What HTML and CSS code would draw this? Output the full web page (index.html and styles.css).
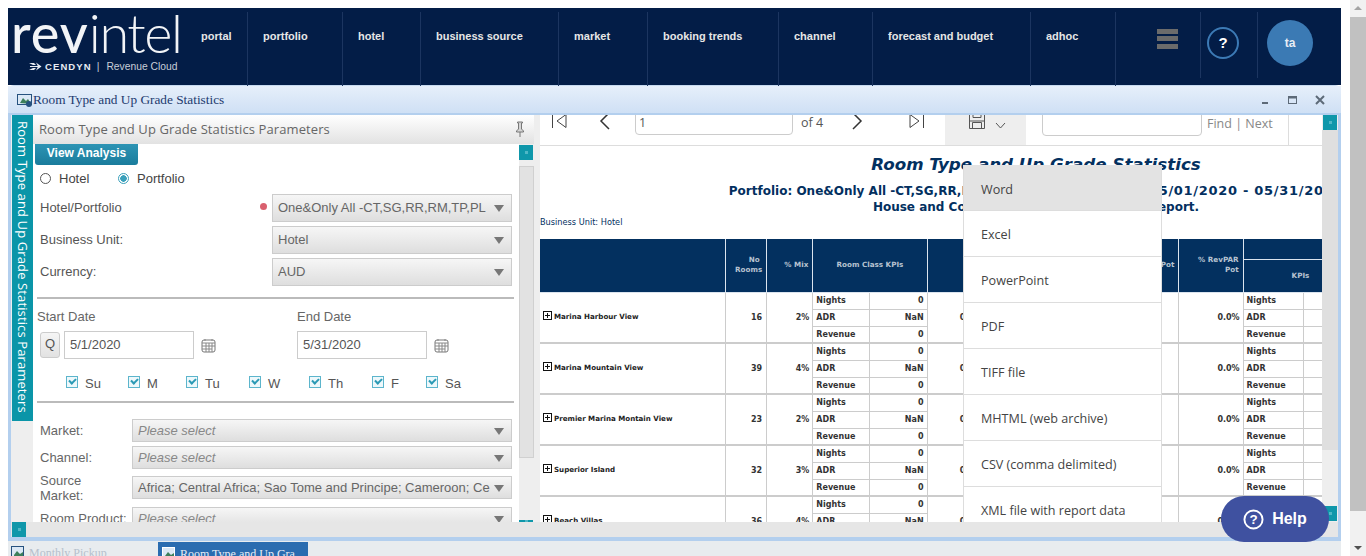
FILE: index.html
```html
<!DOCTYPE html>
<html lang="en">
<head>
    <meta charset="UTF-8">
    <title>Room Type and Up Grade Statistics</title>
    <link rel="stylesheet" href="styles.css">
</head>
<body>
    <div class="page-scroll">
        <span class="arrow-up"></span>
        <div class="page-thumb"></div>
        <span class="arrow-down"></span>
    </div>

    <header class="topbar">
        <div class="logo">
            <div class="logo-word"><b>rev</b>intel</div>
            <div class="logo-sub">
                <svg width="13" height="9" viewBox="0 0 13 9"><path d="M0 1h5l2 2h-3zM1 4h11v1H1zM0 8h5l2-2H4zM7 0.500l5.500 4-5.500 4 2-4z" fill="#e8ecf2"/></svg>
                <b>CENDYN</b><i>|</i><span>Revenue Cloud</span>
            </div>
        </div>
        <nav class="nav">
            <a>portal</a>
            <a>portfolio</a>
            <a>hotel</a>
            <a>business source</a>
            <a>market</a>
            <a>booking trends</a>
            <a>channel</a>
            <a>forecast and budget</a>
            <a>adhoc</a>
        </nav>
        <div class="nav-tool tool-menu">
            <span class="burger"></span>
        </div>
        <div class="nav-tool tool-help"><span class="help-ring">?</span></div>
        <div class="nav-tool tool-user"><span class="avatar">ta</span></div>
    </header>

    <div class="window">
        <div class="window-title">
            <svg class="win-icon" width="16" height="14" viewBox="0 0 16 14"><rect x="0.500" y="1.500" width="14" height="10" fill="#dbe8f5" stroke="#27527f"/><path d="M3 10l3-5 3 3 2-2 3 5z" fill="#3d7f5a"/><circle cx="12" cy="11" r="3" fill="#27527f"/></svg>
            <span class="win-name">Room Type and Up Grade Statistics</span>
            <div class="win-buttons">
                <svg width="10" height="10" viewBox="0 0 10 10"><rect x="1" y="7" width="6" height="2" fill="#5d6a78"/></svg>
                <svg width="10" height="10" viewBox="0 0 10 10"><rect x="0.500" y="1.500" width="8" height="7" fill="none" stroke="#5d6a78"/><rect x="0" y="1" width="9" height="2.500" fill="#5d6a78"/></svg>
                <svg width="10" height="10" viewBox="0 0 10 10"><path d="M1 1l8 8M9 1l-8 8" stroke="#5d6a78" stroke-width="2"/></svg>
            </div>
        </div>

        <div class="window-body">
            <div class="side-tab"><span>Room Type and Up Grade Statistics Parameters</span></div>

            <section class="params">
                <div class="params-head">
                    <span>Room Type and Up Grade Statistics Parameters</span>
                    <svg width="12" height="16" viewBox="0 0 12 16"><path d="M3.500 1h5v1h-1v6l2 2v1h-7v-1l2-2V2h-1z M6 11v5" fill="#d5d5d5" stroke="#777"/></svg>
                </div>
                <div class="params-main">
                    <div class="params-form">
                        <button class="view-btn">View Analysis</button>
                        <div class="radio-row">
                            <span class="radio"></span><label>Hotel</label>
                            <span class="radio on"></span><label>Portfolio</label>
                        </div>

                        <div class="field-row">
                            <label>Hotel/Portfolio</label>
                            <span class="req"></span>
                            <div class="select wide">One&amp;Only All -CT,SG,RR,RM,TP,PL</div>
                        </div>
                        <div class="field-row">
                            <label>Business Unit:</label>
                            <div class="select wide">Hotel</div>
                        </div>
                        <div class="field-row">
                            <label>Currency:</label>
                            <div class="select wide">AUD</div>
                        </div>

                        <hr class="rule first">

                        <div class="dates">
                            <div class="date-col">
                                <div class="date-label">Start Date</div>
                                <div class="date-line">
                                    <span class="q-btn">Q</span>
                                    <span class="date-input">5/1/2020</span>
                                    <svg class="cal" width="15" height="15" viewBox="0 0 15 15"><rect x="1" y="2" width="13" height="12" rx="2" fill="#fff" stroke="#777"/><path d="M1 5h13M5 5v9M8 5v9M11 5v9M1 8h13M1 11h10M4 1v2M11 1v2" stroke="#888"/></svg>
                                </div>
                            </div>
                            <div class="date-col">
                                <div class="date-label">End Date</div>
                                <div class="date-line">
                                    <span class="date-input">5/31/2020</span>
                                    <svg class="cal" width="15" height="15" viewBox="0 0 15 15"><rect x="1" y="2" width="13" height="12" rx="2" fill="#fff" stroke="#777"/><path d="M1 5h13M5 5v9M8 5v9M11 5v9M1 8h13M1 11h10M4 1v2M11 1v2" stroke="#888"/></svg>
                                </div>
                            </div>
                        </div>

                        <div class="days">
                            <span class="day d-su"><i class="check"></i>Su</span>
                            <span class="day d-m"><i class="check"></i>M</span>
                            <span class="day d-tu"><i class="check"></i>Tu</span>
                            <span class="day d-w"><i class="check"></i>W</span>
                            <span class="day d-th"><i class="check"></i>Th</span>
                            <span class="day d-f"><i class="check"></i>F</span>
                            <span class="day d-sa"><i class="check"></i>Sa</span>
                        </div>

                        <hr class="rule second">

                        <div class="filter-row">
                            <label>Market:</label>
                            <div class="select hint">Please select</div>
                        </div>
                        <div class="filter-row">
                            <label>Channel:</label>
                            <div class="select hint">Please select</div>
                        </div>
                        <div class="filter-row source">
                            <label>Source Market:</label>
                            <div class="select">Africa; Central Africa; Sao Tome and Principe; Cameroon; Ce</div>
                        </div>
                        <div class="filter-row">
                            <label>Room Product:</label>
                            <div class="select hint">Please select</div>
                        </div>
                    </div>

                    <div class="v-scroll left-scroll">
                        <span class="sb-btn"></span>
                        <div class="sb-thumb"></div>
                        <span class="sb-btn bottom"></span>
                    </div>
                </div>
            </section>

            <section class="report">
                <div class="toolbar">
                    <svg class="t-first" width="16" height="16" viewBox="0 0 16 16"><path d="M1.500 1v14M15 1.500L6 8l9 6.500z" fill="none" stroke="#444"/></svg>
                    <svg class="t-prev" width="11" height="18" viewBox="0 0 11 18"><path d="M10 1L2 9l8 8" fill="none" stroke="#333" stroke-width="1.500"/></svg>
                    <span class="page-input">1</span>
                    <span class="page-of">of 4</span>
                    <svg class="t-next" width="11" height="18" viewBox="0 0 11 18"><path d="M1 1l8 8-8 8" fill="none" stroke="#333" stroke-width="1.500"/></svg>
                    <svg class="t-last" width="16" height="16" viewBox="0 0 16 16"><path d="M14.500 1v14M1 1.500L10 8l-9 6.500z" fill="none" stroke="#444"/></svg>
                    <div class="save-box">
                        <svg width="18" height="17" viewBox="0 0 18 17"><path d="M1.500 0.500h13l2 2v14h-15zM5 0.500v5h8v-5M4.500 16.500v-6h9v6M1.500 9h15" fill="none" stroke="#555"/></svg>
                        <svg class="chev" width="11" height="7" viewBox="0 0 11 7"><path d="M1 1l4.500 5L10 1" fill="none" stroke="#555"/></svg>
                    </div>
                    <span class="find-input"></span>
                    <span class="find-links">Find | Next</span>
                </div>

                <div class="report-page">
                    <h1>Room Type and Up Grade Statistics</h1>
                    <h2>Portfolio: One&amp;Only All -CT,SG,RR,RM,TP,PL Stay Date Range: <span class="range">05/01/2020 - 05/31/2020</span><br>House and Complimentary Rooms in this report.</h2>
                    <div class="unit">Business Unit: Hotel</div>

                    <table class="grid">
                        <colgroup>
                            <col class="c-name"><col class="c-rooms"><col class="c-mix"><col class="c-kpi"><col class="c-val">
                            <col class="c-a"><col class="c-b"><col class="c-rev"><col class="c-kpi2"><col class="c-val">
                        </colgroup>
                        <thead>
                            <tr class="head-a">
                                <th rowspan="2"></th>
                                <th rowspan="2">No&nbsp;<br>Rooms</th>
                                <th rowspan="2">% Mix</th>
                                <th rowspan="2" colspan="2" class="mid">Room Class KPIs</th>
                                <th rowspan="2"></th>
                                <th rowspan="2" class="pot">% Pot</th>
                                <th rowspan="2">% RevPAR Pot</th>
                                <th colspan="2"></th>
                            </tr>
                            <tr class="head-b">
                                <th colspan="2" class="kpi-head">KPIs</th>
                            </tr>
                        </thead>
                        <tbody>
                            <tr>
                                <td rowspan="3" class="name"><i class="plus"></i>Marina Harbour View</td>
                                <td rowspan="3" class="num room-n">16</td>
                                <td rowspan="3" class="num">2%</td>
                                <td>Nights</td><td class="num">0</td>
                                <td rowspan="3" class="num">0.0%</td><td rowspan="3"></td>
                                <td rowspan="3" class="num">0.0%</td>
                                <td>Nights</td><td class="num">0</td>
                            </tr>
                            <tr><td>ADR</td><td class="num">NaN</td><td>ADR</td><td class="num">NaN</td></tr>
                            <tr class="end"><td>Revenue</td><td class="num">0</td><td>Revenue</td><td class="num">0</td></tr>
                            <tr>
                                <td rowspan="3" class="name"><i class="plus"></i>Marina Mountain View</td>
                                <td rowspan="3" class="num room-n">39</td>
                                <td rowspan="3" class="num">4%</td>
                                <td>Nights</td><td class="num">0</td>
                                <td rowspan="3" class="num">0.0%</td><td rowspan="3"></td>
                                <td rowspan="3" class="num">0.0%</td>
                                <td>Nights</td><td class="num">0</td>
                            </tr>
                            <tr><td>ADR</td><td class="num">NaN</td><td>ADR</td><td class="num">NaN</td></tr>
                            <tr class="end"><td>Revenue</td><td class="num">0</td><td>Revenue</td><td class="num">0</td></tr>
                            <tr>
                                <td rowspan="3" class="name"><i class="plus"></i>Premier Marina Montain View</td>
                                <td rowspan="3" class="num room-n">23</td>
                                <td rowspan="3" class="num">2%</td>
                                <td>Nights</td><td class="num">0</td>
                                <td rowspan="3" class="num">0.0%</td><td rowspan="3"></td>
                                <td rowspan="3" class="num">0.0%</td>
                                <td>Nights</td><td class="num">0</td>
                            </tr>
                            <tr><td>ADR</td><td class="num">NaN</td><td>ADR</td><td class="num">NaN</td></tr>
                            <tr class="end"><td>Revenue</td><td class="num">0</td><td>Revenue</td><td class="num">0</td></tr>
                            <tr>
                                <td rowspan="3" class="name"><i class="plus"></i>Superior Island</td>
                                <td rowspan="3" class="num room-n">32</td>
                                <td rowspan="3" class="num">3%</td>
                                <td>Nights</td><td class="num">0</td>
                                <td rowspan="3" class="num">0.0%</td><td rowspan="3"></td>
                                <td rowspan="3" class="num">0.0%</td>
                                <td>Nights</td><td class="num">0</td>
                            </tr>
                            <tr><td>ADR</td><td class="num">NaN</td><td>ADR</td><td class="num">NaN</td></tr>
                            <tr class="end"><td>Revenue</td><td class="num">0</td><td>Revenue</td><td class="num">0</td></tr>
                            <tr>
                                <td rowspan="3" class="name"><i class="plus"></i>Beach Villas</td>
                                <td rowspan="3" class="num room-n">36</td>
                                <td rowspan="3" class="num">4%</td>
                                <td>Nights</td><td class="num">0</td>
                                <td rowspan="3" class="num">0.0%</td><td rowspan="3"></td>
                                <td rowspan="3" class="num">0.0%</td>
                                <td>Nights</td><td class="num">0</td>
                            </tr>
                            <tr><td>ADR</td><td class="num">NaN</td><td>ADR</td><td class="num">NaN</td></tr>
                            <tr class="end"><td>Revenue</td><td class="num">0</td><td>Revenue</td><td class="num">0</td></tr>
                        </tbody>
                    </table>
                </div>

                <ul class="export-menu">
                    <li class="active">Word</li>
                    <li>Excel</li>
                    <li>PowerPoint</li>
                    <li>PDF</li>
                    <li>TIFF file</li>
                    <li>MHTML (web archive)</li>
                    <li>CSV (comma delimited)</li>
                    <li>XML file with report data</li>
                </ul>
            </section>

            <div class="v-scroll right-scroll">
                <span class="sb-btn"></span>
                <div class="sb-thumb"></div>
                <span class="sb-btn low"></span>
            </div>
        </div>

        <div class="h-scroll"><span class="sb-btn"></span></div>
    </div>

    <div class="taskbar">
        <div class="task faded">
            <svg width="14" height="13" viewBox="0 0 14 13"><rect x="0.500" y="0.500" width="12" height="12" fill="#dbe8f5" stroke="#27527f"/><path d="M3 9l3-4 3 3 3-2v6H3z" fill="#3d7f5a"/></svg>
            Monthly Pickup
        </div>
        <div class="task current">
            <svg width="14" height="13" viewBox="0 0 14 13"><rect x="0.500" y="0.500" width="12" height="12" fill="#dbe8f5" stroke="#fff"/><path d="M3 9l3-4 3 3 3-2v6H3z" fill="#3d7f5a"/></svg>
            Room Type and Up Gra
        </div>
    </div>

    <button class="help-fab">
        <svg width="21" height="21" viewBox="0 0 22 22"><circle cx="11" cy="11" r="9.500" fill="none" stroke="#fff" stroke-width="2"/><text x="11" y="16" text-anchor="middle" font-family="Liberation Sans" font-weight="700" font-size="14" fill="#fff">?</text></svg>
        Help
    </button>
</body>
</html>
```

FILE: styles.css
```css
html, body {
    height: 100%;
    overflow: hidden;
}
body {
    margin: 0;
    padding: 8px 25px 0 8px;
    box-sizing: border-box;
    background: #fff;
    font-family: "Liberation Sans", Arial, sans-serif;
    font-size: 13px;
    color: #555;
}

/* page scrollbar */
.page-scroll {
    position: fixed;
    top: 0;
    right: 0;
    bottom: 0;
    width: 16px;
    background: #f1f1f1;
}
.page-thumb {
    position: absolute;
    top: 17px;
    left: 0;
    right: 0;
    height: 494px;
    background: #c1c1c1;
}
.arrow-up, .arrow-down {
    position: absolute;
    left: 4px;
    border-left: 4px solid transparent;
    border-right: 4px solid transparent;
}
.arrow-up {
    top: 6px;
    border-bottom: 4px solid #a3a3a3;
}
.arrow-down {
    bottom: 6px;
    border-top: 4px solid #505050;
}

/* top navigation */
.topbar {
    display: flex;
    height: 77px;
    background: #031d47;
}
.logo {
    width: 193px;
    flex: none;
    padding-left: 3px;
    box-sizing: border-box;
    color: #fff;
}
.logo-word {
    font-family: Lato, sans-serif;
    font-weight: 300;
    font-size: 54px;
    line-height: 50px;
    letter-spacing: -1.400px;
    white-space: nowrap;
    color: #f2f4f7;
}
.logo-word b {
    font-weight: 500;
    letter-spacing: 1px;
}
.logo-sub {
    display: flex;
    align-items: center;
    gap: 3px;
    margin: 3px 0 0 18px;
    font-size: 10.300px;
    white-space: nowrap;
    color: #c8ced8;
}
.logo-sub b {
    font-family: "Liberation Sans", sans-serif;
    font-size: 9.500px;
    letter-spacing: 1.100px;
    color: #e8ecf2;
}
.logo-sub i {
    font-style: normal;
    margin: 0 4px 0 2px;
}
.nav {
    display: grid;
    grid-template-columns: 47px 95px 78px 138px 89px 131px 94px 158px 85px;
}
.nav a {
    display: block;
    margin-top: 4px;
    height: 66px;
    padding: 18px 0 0 15px;
    border-right: 1px solid #1c3560;
    font-weight: bold;
    font-size: 11px;
    white-space: nowrap;
    color: #e6e6e6;
}
.nav a:first-child {
    padding-left: 0;
}
.nav-tool {
    margin-top: 4px;
    height: 66px;
    border-right: 1px solid #1c3560;
    box-sizing: border-box;
    position: relative;
    flex: none;
}
.tool-menu {
    width: 85px;
}
.tool-help {
    width: 57px;
}
.tool-user {
    border-right: 0;
    flex: 1;
}
.burger {
    position: absolute;
    left: 41px;
    top: 17px;
    width: 21px;
    height: 5px;
    background: #6b6b6b;
    box-shadow: 0 7px 0 #6b6b6b, 0 15px 0 #6b6b6b;
}
.help-ring {
    position: absolute;
    left: 6px;
    top: 15px;
    width: 28px;
    height: 28px;
    border: 2px solid #3c7ab5;
    border-radius: 50%;
    text-align: center;
    line-height: 28px;
    font-weight: bold;
    font-size: 15px;
    color: #fff;
}
.avatar {
    position: absolute;
    left: 9px;
    top: 8px;
    width: 46px;
    height: 46px;
    border-radius: 50%;
    background: #3b7ab4;
    text-align: center;
    line-height: 46px;
    font-weight: bold;
    font-size: 12px;
    color: #e8eef5;
}

/* window */
.window {
    border: 3px solid #b3cfee;
    border-top: 1px solid #c7daf0;
    border-bottom-width: 4px;
    border-radius: 6px 6px 0 0;
    height: 456px;
    box-sizing: border-box;
    display: flex;
    flex-direction: column;
}
.window-title {
    display: flex;
    align-items: center;
    height: 27px;
    flex: none;
    margin: 0 -3px;
    padding-left: 9px;
    background: linear-gradient(#e6effa, #cfe0f5);
    border-bottom: 2px solid #b3cfee;
    font-family: "Liberation Serif", serif;
    font-size: 13.300px;
    color: #1d3a6e;
}
.win-name {
    flex: 1;
}
.win-buttons {
    display: flex;
    gap: 17px;
    padding-right: 16px;
}
.window-body {
    flex: 1;
    display: flex;
    min-height: 0;
    background: #eee;
}
.side-tab {
    width: 21px;
    margin-left: 1px;
    height: 306px;
    flex: none;
    background: #0a95a8;
    color: #fff;
    font-family: "Open Sans", sans-serif;
    font-size: 13px;
    text-align: center;
    overflow: hidden;
}
.side-tab span {
    display: block;
    writing-mode: vertical-rl;
    white-space: nowrap;
    margin: 6px auto 0;
    line-height: 21px;
    letter-spacing: 0.120px;
}

/* parameters panel */
.params {
    width: 507px;
    flex: none;
    overflow: hidden;
}
.params-head {
    display: flex;
    align-items: center;
    height: 29px;
    padding: 0 0 2px 6px;
    width: 501px;
    box-sizing: border-box;
    background: linear-gradient(#fff, #e2e2e2);
    font-family: "Open Sans", sans-serif;
    font-size: 13px;
    letter-spacing: 0.1px;
    color: #666;
}
.params-head span {
    width: 475px;
}
.params-main {
    display: flex;
    height: 378px;
}
.params-form {
    width: 486px;
    flex: none;
    background: #fff;
    overflow: hidden;
}
.view-btn {
    display: block;
    margin-left: 2px;
    width: 103px;
    height: 21px;
    padding: 0 0 3px;
    border: 0;
    border-radius: 0 0 3px 3px;
    background: linear-gradient(#2d94b4, #1a7c9c);
    font-family: "Liberation Sans", sans-serif;
    font-weight: bold;
    font-size: 12px;
    color: #fff;
}
.radio-row {
    display: flex;
    align-items: center;
    height: 13px;
    margin: 7px 0 0 7px;
    color: #444;
}
.radio {
    width: 9px;
    height: 9px;
    flex: none;
    border: 1px solid #555;
    border-radius: 50%;
    background: #fff;
}
.radio.on {
    border-color: #3aa0bb;
    background: radial-gradient(circle, #3aa0bb 0 3px, #fff 3.500px);
}
.radio-row label {
    margin-left: 8px;
    width: 59px;
}
.field-row {
    display: flex;
    align-items: center;
    height: 28px;
    margin: 0 7px 4px 7px;
    position: relative;
}
.radio-row + .field-row {
    margin-top: 9px;
}
.field-row label {
    flex: 1;
    padding-bottom: 2px;
}
.req {
    position: absolute;
    left: 220px;
    top: 9px;
    width: 7px;
    height: 7px;
    border-radius: 50%;
    background: #d9606e;
}
.select {
    position: relative;
    box-sizing: border-box;
    border: 1px solid #ccc;
    background: linear-gradient(#f6f6f6, #dedede);
    padding: 0 5px;
    white-space: nowrap;
    overflow: hidden;
    font-size: 13px;
    color: #666;
}
.select::after {
    content: "";
    position: absolute;
    right: 7px;
    top: 50%;
    margin-top: -3px;
    border-left: 5px solid transparent;
    border-right: 5px solid transparent;
    border-top: 7px solid #777;
}
.select.wide {
    width: 240px;
    height: 28px;
    line-height: 26px;
}
.rule {
    height: 0;
    margin: 0 5px 0 4px;
    border: 0;
    border-top: 2px solid #bbb;
}
.rule.first {
    margin-top: 11px;
}
.dates {
    display: flex;
    padding: 11px 0 0 4px;
}
.date-col {
    width: 260px;
    flex: none;
}
.date-label {
    height: 14px;
    line-height: 14px;
    color: #666;
}
.date-line {
    display: flex;
    align-items: center;
    margin-top: 7px;
}
.q-btn {
    width: 20px;
    height: 26px;
    margin: 0 4px 0 3px;
    line-height: 22px;
    text-align: center;
    box-sizing: border-box;
    border: 1px solid #ccc;
    border-radius: 3px;
    background: linear-gradient(#f5f5f5, #e2e2e2);
}
.date-input {
    box-sizing: border-box;
    width: 130px;
    height: 28px;
    padding-left: 5px;
    line-height: 26px;
    border: 1px solid #ccc;
    color: #555;
}
.cal {
    margin-left: 7px;
}
.days {
    position: relative;
    height: 24px;
    margin-top: 12px;
    color: #555;
}
.day {
    position: absolute;
    top: 6px;
    line-height: 14px;
    display: flex;
    align-items: center;
    gap: 7px;
}
.d-su { left: 33px; }
.d-m { left: 95px; }
.d-tu { left: 153px; }
.d-w { left: 216px; }
.d-th { left: 276px; }
.d-f { left: 339px; }
.d-sa { left: 393px; }
.check {
    position: relative;
    top: -2px;
    width: 10px;
    height: 10px;
    border: 1px solid #5cb5cc;
    background: #eef8fb;
}
.check::after {
    content: "";
    position: absolute;
    left: 2px;
    top: 1px;
    width: 5px;
    height: 3px;
    border-left: 2px solid #2c9ab5;
    border-bottom: 2px solid #2c9ab5;
    transform: rotate(-45deg);
}
.rule.second {
    margin-top: 6px;
}
.filter-row {
    display: flex;
    align-items: center;
    margin: 0 7px 4px 7px;
    height: 23px;
}
.rule.second + .filter-row {
    margin-top: 16px;
}
.filter-row label {
    width: 92px;
    flex: none;
    color: #666;
    white-space: nowrap;
}
.filter-row .select {
    flex: 1;
    min-width: 0;
    height: 23px;
    line-height: 21px;
}
.filter-row.source {
    margin: 7px 7px 8px 7px;
}
.filter-row.source label {
    white-space: normal;
    box-sizing: border-box;
    padding-right: 40px;
    line-height: 15px;
}
.filter-row .hint {
    font-style: italic;
    color: #888;
}

/* scrollbars */
.v-scroll {
    position: relative;
    width: 15px;
    flex: none;
    background: #eee;
}
.sb-btn {
    display: flex;
    align-items: center;
    justify-content: center;
    width: 14px;
    height: 15px;
    background: #0f97aa;
}
.sb-btn::after {
    content: "";
    width: 3px;
    height: 3px;
    background: #4fb7c6;
}
.sb-thumb {
    background: #e2e2e2;
    border: 1px solid #d0d0d0;
    box-sizing: border-box;
}
.left-scroll {
    padding-top: 1px;
}
.left-scroll .sb-thumb {
    margin-top: 6px;
    height: 292px;
}
.left-scroll .bottom {
    position: absolute;
    bottom: 0;
    height: 2px;
}
.right-scroll {
    width: 16px;
}
.right-scroll .sb-btn {
    margin-left: 1px;
}
.right-scroll .sb-thumb {
    height: 320px;
    border: 0;
    background: #dfdfdf;
}
.right-scroll .low {
    position: absolute;
    top: 391px;
}
.h-scroll {
    height: 15px;
    flex: none;
    background: #e6e6e6;
}
.h-scroll .sb-btn {
    margin-left: 1px;
}

/* report pane */
.report {
    position: relative;
    width: 782px;
    flex: none;
    background: #fff;
    overflow: hidden;
}
.toolbar {
    position: relative;
    height: 31px;
    border-bottom: 1px solid #ddd;
    box-sizing: border-box;
    font-family: "Open Sans", sans-serif;
    font-size: 12.500px;
    color: #555;
}
.toolbar > * {
    position: absolute;
}
.t-first { left: 11px; top: -2px; }
.t-prev { left: 59px; top: -3px; }
.t-next { left: 312px; top: -3px; }
.t-last { left: 369px; top: -2px; }
.page-input {
    left: 95px;
    top: -2px;
    width: 158px;
    height: 22px;
    padding-left: 3px;
    box-sizing: border-box;
    border: 1px solid #ccc;
    border-radius: 0 0 4px 4px;
    line-height: 17px;
}
.page-of {
    left: 261px;
    top: -1px;
}
.save-box {
    left: 405px;
    top: 0;
    width: 81px;
    height: 30px;
    background: #eee;
}
.save-box svg {
    position: absolute;
    left: 23px;
    top: -3px;
}
.save-box .chev {
    left: 50px;
    top: 7px;
}
.find-input {
    left: 502px;
    top: -2px;
    width: 160px;
    height: 23px;
    box-sizing: border-box;
    border: 1px solid #ccc;
    border-radius: 0 0 4px 4px;
}
.find-links {
    left: 667px;
    top: 0;
    width: 81px;
    height: 30px;
    border-right: 1px solid #ddd;
    color: #888;
}
.report-page {
    width: 992px;
}
.report-page h1 {
    margin: 6px 0 0;
    height: 24px;
    line-height: 24px;
    text-align: center;
    font-family: "DejaVu Sans", sans-serif;
    font-style: italic;
    font-size: 16.700px;
    color: #03305f;
}
.report-page h2 {
    margin: 7px 0 0;
    text-align: center;
    font-family: "DejaVu Sans", sans-serif;
    font-size: 12px;
    line-height: 16px;
    white-space: nowrap;
    color: #03305f;
}
.range {
    font-size: 13px;
    letter-spacing: 0.7px;
}
.unit {
    margin-top: -1px;
    height: 16px;
    line-height: 16px;
    font-family: "DejaVu Sans", sans-serif;
    font-size: 8.200px;
    color: #03305f;
}
.grid {
    table-layout: fixed;
    width: 821px;
    margin-top: 9px;
    border-collapse: collapse;
    font-family: "DejaVu Sans", sans-serif;
    font-size: 8px;
    font-weight: bold;
    color: #333;
}
.c-name { width: 185px; }
.c-rooms { width: 41px; }
.c-mix { width: 46px; }
.c-kpi { width: 57px; }
.c-val { width: 57px; }
.c-a { width: 58px; }
.c-b { width: 193px; }
.c-rev { width: 64px; }
.c-kpi2 { width: 60px; }
.grid th {
    background: #03305f;
    border: 1px solid #dbe4ee;
    border-top: 0;
    padding: 0 4px;
    text-align: right;
    font-size: 7.200px;
    line-height: 10px;
    color: #b7c3d1;
}
.grid th:first-child {
    border-left: 0;
}
.grid th.mid {
    text-align: center;
}
.head-a {
    height: 20px;
}
.head-b {
    height: 33px;
}
.grid th.kpi-head {
    text-align: left;
    padding-left: 48px;
}
.grid td {
    height: 16px;
    padding: 0 3px;
    border: 1px solid #ccc;
    white-space: nowrap;
    overflow: hidden;
}
.grid td:first-child {
    border-left: 0;
}
.grid tr.end td {
    height: 15px;
    border-bottom: 2px solid #ccc;
}
.grid td[rowspan] {
    border-bottom: 2px solid #ccc;
}
.grid td.num {
    text-align: right;
}
.grid td.room-n {
    padding-right: 4px;
}
.grid td.name {
    padding: 0 3px 3px;
    font-size: 7.100px;
    color: #222;
}
.plus {
    display: inline-block;
    position: relative;
    vertical-align: -1px;
    width: 7px;
    height: 7px;
    margin-right: 2px;
    border: 1px solid #111;
}
.plus::before, .plus::after {
    content: "";
    position: absolute;
    background: #111;
}
.plus::before {
    left: 1px;
    top: 3px;
    width: 5px;
    height: 1px;
}
.plus::after {
    left: 3px;
    top: 1px;
    width: 1px;
    height: 5px;
}

/* export dropdown */
.export-menu {
    position: absolute;
    left: 423px;
    top: 50px;
    width: 199px;
    margin: 0;
    padding: 0;
    list-style: none;
    background: #fff;
    border-left: 1px solid #ddd;
    border-right: 1px solid #ddd;
    box-sizing: border-box;
    font-family: "Open Sans", sans-serif;
    font-size: 12.600px;
    color: #444;
}
.export-menu li {
    height: 46px;
    box-sizing: border-box;
    padding: 1px 0 0 17px;
    line-height: 46px;
    border-bottom: 1px solid #ddd;
}
.export-menu li.active {
    padding-top: 2px;
    background: #e3e3e3;
}

/* tabs under the window */
.taskbar {
    display: flex;
    height: 15px;
    background: #e8ecef;
    overflow: hidden;
    font-family: "Liberation Serif", serif;
    font-size: 12px;
}
.task {
    display: flex;
    gap: 4px;
    width: 150px;
    height: 20px;
    padding: 5px 0 0 3px;
    box-sizing: border-box;
}
.task.faded {
    color: #b5c0cc;
}
.task.current {
    margin-top: 1px;
    background: #2a6cb0;
    color: #e8eef5;
    padding-left: 4px;
}

.help-fab {
    position: fixed;
    left: 1221px;
    top: 496px;
    width: 108px;
    height: 46px;
    display: flex;
    align-items: center;
    justify-content: center;
    gap: 8px;
    border: 0;
    border-radius: 23px;
    background: #3f51a0;
    font-family: "Liberation Sans", sans-serif;
    font-weight: bold;
    font-size: 16px;
    color: #fff;
}
```
